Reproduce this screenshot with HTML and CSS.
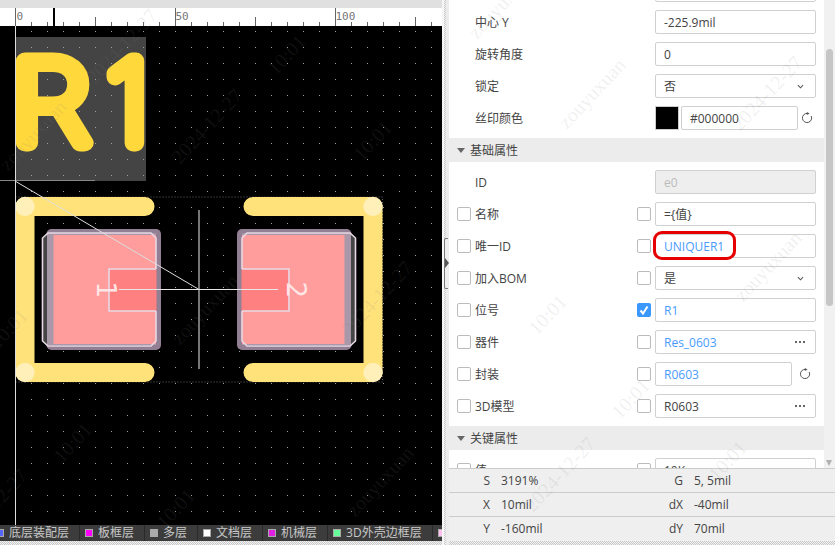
FILE: index.html
```html
<!DOCTYPE html>
<html lang="zh-CN">
<head>
    <meta charset="UTF-8">
    <title>PCB 属性</title>
    <link rel="stylesheet" href="styles.css">
</head>
<body>
    <div class="editor">
        <div class="top-strip"></div>
        <svg class="ruler" viewBox="0 8 442 18">
            <defs>
                <pattern id="ruler-minor" x="15" y="8" width="16" height="18" patternUnits="userSpaceOnUse">
                    <rect x="0" y="14" width="1" height="4" fill="#666"/>
                </pattern>
                <pattern id="ruler-mid" x="15" y="8" width="80" height="18" patternUnits="userSpaceOnUse">
                    <rect x="0" y="9" width="1" height="9" fill="#666"/>
                </pattern>
                <pattern id="ruler-major" x="15" y="8" width="160" height="18" patternUnits="userSpaceOnUse">
                    <rect x="0" y="0" width="1" height="18" fill="#666"/>
                </pattern>
            </defs>
            <rect x="0" y="8" width="442" height="18" fill="url(#ruler-minor)"/>
            <rect x="0" y="8" width="442" height="18" fill="url(#ruler-mid)"/>
            <rect x="0" y="8" width="442" height="18" fill="url(#ruler-major)"/>
            <rect x="53" y="8" width="2" height="18" fill="#000"/>
            <text class="ruler-num" x="16.5" y="20">0</text>
            <text class="ruler-num" x="175.5" y="20">50</text>
            <text class="ruler-num" x="335.5" y="20">100</text>
        </svg>

        <!-- canvas uses page coordinates -->
        <svg class="board" viewBox="0 26 442 499">
            <defs>
                <pattern id="grid" x="15" y="15" width="16" height="16" patternUnits="userSpaceOnUse">
                    <rect x="0" y="0" width="1" height="1" fill="#a0a0a0"/>
                </pattern>
                <g id="pad">
                    <rect x="46.5" y="229" width="114.5" height="121" rx="5" fill="#937f93"/>
                    <path d="M48 233.5H151L155.8 238V344L151 345.5H48L43 341V238Z" fill="#444"/>
                    <rect x="47" y="233" width="109" height="112" fill="#a898aa"/>
                    <rect x="53.5" y="235" width="102.5" height="109" fill="#ff9c9c"/>
                    <rect x="109.5" y="269.5" width="47" height="41" fill="#ff8080"/>
                    <path d="M156 269H109V311H156M156 269V238L151 233H48L42.5 238V341L48 346H151L156 341V311" fill="none" stroke="#e8d8e4" stroke-width="1.6"/>
                </g>
            </defs>
            <rect x="0" y="26" width="442" height="499" fill="#000"/>
            <rect x="15.5" y="37" width="130.5" height="144" fill="#444"/>
            <rect x="0" y="26" width="442" height="499" fill="url(#grid)"/>
            <text class="silk" x="11" y="143" textLength="79" lengthAdjust="spacingAndGlyphs">R</text>
            <text class="silk" x="107" y="143">1</text>

            <rect x="15.5" y="197" width="367" height="185" class="bounds"/>
            <use href="#pad"/>
            <use href="#pad" transform="matrix(-1 0 0 1 398 0)"/>
            <text class="pad-num" transform="translate(97 281.5) rotate(90)">1</text>
            <text class="pad-num" transform="translate(287 281.5) rotate(90)">2</text>

            <path class="outline" d="M25 206.5H145M25 206.5V372.5M25 372.5H145M373 206.5H253M373 206.5V372.5M373 372.5H253"/>
            <circle class="outline-joint" cx="25" cy="206.5" r="9.7"/>
            <circle class="outline-joint" cx="25" cy="372.5" r="9.7"/>
            <circle class="outline-joint" cx="373" cy="206.5" r="9.7"/>
            <circle class="outline-joint" cx="373" cy="372.5" r="9.7"/>

            <path class="axis-thick" d="M199 210V369"/>
            <path class="axis-thin" d="M119 289.5H278"/>
            <path class="guide" d="M15 181L199 289.5"/>
            <path class="cross-h" d="M0 180.5H95"/>
            <path class="cross-v" d="M15.5 26V525"/>
        </svg>

        <div class="layers">
            <div class="layer layer-first"><i class="swatch swatch-blue"></i>底层装配层</div>
            <div class="layer"><i class="swatch swatch-magenta"></i>板框层</div>
            <div class="layer"><i class="swatch swatch-grey"></i>多层</div>
            <div class="layer"><i class="swatch swatch-white"></i>文档层</div>
            <div class="layer"><i class="swatch swatch-purple"></i>机械层</div>
            <div class="layer"><i class="swatch swatch-green"></i>3D外壳边框层</div>
            <div class="layer"><i class="swatch swatch-pink"></i></div>
        </div>
        <div class="dots-strip"></div>
    </div>

    <div class="splitter">
        <div class="splitter-tab"><i class="splitter-arrow"></i></div>
    </div>

    <div class="panel">
        <div class="props">
            <div class="props-list">
                <div class="row">
                    <div class="row-label">中心 X</div>
                    <div class="field"><span></span></div>
                </div>
                <div class="row">
                    <div class="row-label">中心 Y</div>
                    <div class="field"><span>-225.9mil</span></div>
                </div>
                <div class="row">
                    <div class="row-label">旋转角度</div>
                    <div class="field"><span>0</span></div>
                </div>
                <div class="row">
                    <div class="row-label">锁定</div>
                    <div class="field">
                        <span>否</span>
                        <svg class="chevron" viewBox="0 0 8 5"><path d="M1 1L4 4L7 1"/></svg>
                    </div>
                </div>
                <div class="row">
                    <div class="row-label">丝印颜色</div>
                    <div class="color-swatch"></div>
                    <div class="field field-color"><span>#000000</span></div>
                    <svg class="reset reset-near" viewBox="0 0 12 12"><path d="M6.5 1.4A4.6 4.6 0 1 0 10.2 4"/><path class="reset-tip" d="M5.8 0L8.6 1.5L5.8 3Z"/></svg>
                </div>

                <div class="section"><i class="section-arrow"></i>基础属性</div>

                <div class="row">
                    <div class="row-label">ID</div>
                    <div class="field field-disabled"><span>e0</span></div>
                </div>
                <div class="row">
                    <label class="check"></label>
                    <div class="row-label row-label-check">名称</div>
                    <label class="check"></label>
                    <div class="field"><span>={值}</span></div>
                </div>
                <div class="row">
                    <label class="check"></label>
                    <div class="row-label row-label-check">唯一ID</div>
                    <label class="check"></label>
                    <div class="field field-blue">
                        <span>UNIQUER1</span>
                        <div class="highlight"></div>
                    </div>
                </div>
                <div class="row">
                    <label class="check"></label>
                    <div class="row-label row-label-check">加入BOM</div>
                    <label class="check"></label>
                    <div class="field">
                        <span>是</span>
                        <svg class="chevron" viewBox="0 0 8 5"><path d="M1 1L4 4L7 1"/></svg>
                    </div>
                </div>
                <div class="row">
                    <label class="check"></label>
                    <div class="row-label row-label-check">位号</div>
                    <label class="check check-on">
                        <svg viewBox="0 0 14 14"><path d="M3.5 7.5L6 10.5L10.5 3.5"/></svg>
                    </label>
                    <div class="field field-blue"><span>R1</span></div>
                </div>
                <div class="row">
                    <label class="check"></label>
                    <div class="row-label row-label-check">器件</div>
                    <label class="check"></label>
                    <div class="field field-blue">
                        <span>Res_0603</span>
                        <div class="more"><i></i><i></i><i></i></div>
                    </div>
                </div>
                <div class="row">
                    <label class="check"></label>
                    <div class="row-label row-label-check">封装</div>
                    <label class="check"></label>
                    <div class="field field-blue field-short"><span>R0603</span></div>
                    <svg class="reset" viewBox="0 0 12 12"><path d="M6.5 1.4A4.6 4.6 0 1 0 10.2 4"/><path class="reset-tip" d="M5.8 0L8.6 1.5L5.8 3Z"/></svg>
                </div>
                <div class="row">
                    <label class="check"></label>
                    <div class="row-label row-label-check">3D模型</div>
                    <label class="check"></label>
                    <div class="field">
                        <span>R0603</span>
                        <div class="more"><i></i><i></i><i></i></div>
                    </div>
                </div>

                <div class="section"><i class="section-arrow"></i>关键属性</div>

                <div class="row">
                    <label class="check"></label>
                    <div class="row-label row-label-check">值</div>
                    <label class="check"></label>
                    <div class="field"><span>10K</span></div>
                </div>
            </div>
            <div class="scrollbar">
                <div class="scroll-thumb"></div>
                <i class="scroll-down"></i>
            </div>
        </div>

        <div class="status">
            <div class="status-row">
                <div class="status-cell"><b>S</b><span>3191%</span></div>
                <div class="status-cell"><b>G</b><span>5, 5mil</span></div>
            </div>
            <div class="status-row">
                <div class="status-cell"><b>X</b><span>10mil</span></div>
                <div class="status-cell"><b>dX</b><span>-40mil</span></div>
            </div>
            <div class="status-row">
                <div class="status-cell"><b>Y</b><span>-160mil</span></div>
                <div class="status-cell"><b>dY</b><span>70mil</span></div>
            </div>
        </div>
        <div class="dots-strip"></div>
    </div>

    <!-- watermark over the whole window -->
    <svg class="watermark" viewBox="0 0 835 545">
        <text transform="translate(95 85) rotate(-47)">2024-12-27</text>
        <text transform="translate(8 172) rotate(-47)">zouyuxuan</text>
        <text transform="translate(180 165) rotate(-47)">2024-12-27</text>
        <text transform="translate(276 76) rotate(-47)">10:01</text>
        <text transform="translate(362 162) rotate(-47)">10:01</text>
        <text transform="translate(180 346) rotate(-47)">zouyuxuan</text>
        <text transform="translate(350 337) rotate(-47)">2024-12-27</text>
        <text transform="translate(-2 350) rotate(-47)">10:01</text>
        <text transform="translate(62 464) rotate(-47)">10:01</text>
        <text transform="translate(-35 545) rotate(-47)">2024-12-27</text>
        <text transform="translate(165 530) rotate(-47)">10:01</text>
        <text transform="translate(355 518) rotate(-47)">zouyuxuan</text>
        <text transform="translate(567 130) rotate(-47)">zouyuxuan</text>
        <text transform="translate(477 40) rotate(-47)">zouyuxuan</text>
        <text transform="translate(740 132) rotate(-47)">2024-12-27</text>
        <text transform="translate(537 336) rotate(-47)">10:01</text>
        <text transform="translate(743 303) rotate(-47)">zouyuxuan</text>
        <text transform="translate(533 513) rotate(-47)">2024-12-27</text>
        <text transform="translate(620 420) rotate(-47)">10:01</text>
        <text transform="translate(717 482) rotate(-47)">10:01</text>
    </svg>
</body>
</html>
```

FILE: styles.css
```css
/* Base */
* {
    margin: 0;
    padding: 0;
    box-sizing: border-box;
}

body {
    width: 835px;
    height: 545px;
    display: flex;
    position: relative;
    overflow: hidden;
    background: #fff;
    color: #444;
    font-family: "Open Sans", "Noto Sans CJK SC", sans-serif;
    font-size: 12px;
}

/* Left side: ruler, board, layer tabs */
.editor {
    width: 442px;
    height: 545px;
    display: flex;
    flex-direction: column;
}

.top-strip {
    height: 8px;
    background: #e0e0e0;
}

.ruler {
    display: block;
    width: 442px;
    height: 18px;
    background: #fff;
}

.ruler-num {
    font-family: "DejaVu Sans Mono", monospace;
    font-size: 11px;
    fill: #777;
}

.board {
    display: block;
    width: 442px;
    height: 499px;
}

.silk {
    font-family: Inter, sans-serif;
    font-weight: 100;
    font-size: 113px;
    fill: #ffd83c;
    stroke: #ffd83c;
    stroke-width: 17;
    stroke-linejoin: round;
    stroke-linecap: round;
}

.bounds {
    fill: none;
    stroke: #666;
    stroke-dasharray: 1 2;
}

.pad-num {
    font-family: "DejaVu Sans", sans-serif;
    font-weight: 400;
    font-size: 26px;
    fill: #ffe6e6;
}

.outline {
    fill: none;
    stroke: #ffe27a;
    stroke-width: 19;
    stroke-linecap: round;
}

.outline-joint {
    fill: #ffefb8;
}

.axis-thick {
    stroke: #777;
    stroke-width: 2;
}

.axis-thin {
    stroke: #e8e8e8;
    stroke-width: 1;
}

.guide {
    stroke: #ddd;
    stroke-width: 1;
    fill: none;
}

.cross-h {
    stroke: #888;
    stroke-width: 1;
}

.cross-v {
    stroke: #ddd;
    stroke-width: 1;
}

.layers {
    height: 16px;
    display: flex;
    overflow: hidden;
    background: #3c3c3c;
    color: #c8c8c8;
    line-height: 16px;
    white-space: nowrap;
}

.layer {
    display: flex;
    align-items: center;
    gap: 5px;
    padding: 0 10px 0 5px;
    border-right: 1px solid #2a2a2a;
    font-size: 12px;
}

.layer-first {
    margin-left: -9px;
}

.swatch {
    display: block;
    flex: none;
    width: 8px;
    height: 8px;
    border: 1px solid #aaa;
}

.swatch-blue { background: #5566ff; }
.swatch-magenta { background: #ff00ff; }
.swatch-grey { background: #aaa; }
.swatch-white { background: #fff; }
.swatch-purple { background: #e020e0; }
.swatch-green { background: #66ff99; }
.swatch-pink { background: #ffc0f0; }

.dots-strip {
    height: 4px;
    flex: none;
    background: repeating-conic-gradient(#c8c8c8 0 25%, #f2f2f2 0 50%) 0 0 / 2px 2px;
}

/* Splitter */
.splitter {
    width: 7px;
    height: 545px;
    position: relative;
    flex: none;
    background: linear-gradient(to right, #f6f6f6 2px, transparent 2px, transparent 4px, #ececec 4px),
        repeating-conic-gradient(#c8c8c8 0 25%, #f2f2f2 0 50%) 0 0 / 2px 2px;
}

.splitter-tab {
    position: absolute;
    left: 2px;
    top: 238px;
    width: 4px;
    height: 51px;
    border: 1px solid #777;
    border-right: none;
    border-radius: 2px 0 0 2px;
    background: #eee;
}

.splitter-arrow {
    position: absolute;
    left: 0;
    top: 19px;
    border-left: 4px solid #555;
    border-top: 5px solid transparent;
    border-bottom: 5px solid transparent;
}

/* Property panel */
.panel {
    width: 386px;
    height: 545px;
    display: flex;
    flex-direction: column;
}

.props {
    height: 468px;
    display: flex;
    overflow: hidden;
}

.props-list {
    width: 375px;
    margin-top: -26px;
}

.row {
    height: 32px;
    display: flex;
    align-items: center;
    padding-left: 8px;
}

.row-label {
    width: 198px;
    padding-left: 18px;
    padding-top: 1px;
    line-height: 24px;
    white-space: nowrap;
}

.row-label-check {
    width: 166px;
    padding-left: 4px;
}

.check {
    display: block;
    flex: none;
    width: 14px;
    height: 14px;
    margin-right: 0;
    border: 1px solid #bbb;
    border-radius: 2px;
    background: #fff;
}

.row-label-check + .check {
    margin-right: 4px;
}

.check-on {
    border: none;
    background: #3a97fb;
}

.check-on svg {
    display: block;
    width: 14px;
    height: 14px;
    fill: none;
    stroke: #fff;
    stroke-width: 2;
}

.field {
    width: 161px;
    height: 24px;
    flex: none;
    display: flex;
    align-items: center;
    justify-content: space-between;
    position: relative;
    padding: 0 9px 0 8px;
    border: 1px solid #d0d0d0;
    border-radius: 2px;
    background: #fff;
    color: #444;
    white-space: nowrap;
}

.field-blue {
    color: #4a9bff;
}

.field-disabled {
    background: #eee;
    color: #bbb;
}

.field-color {
    width: 117px;
    margin-left: 2px;
}

.field-short {
    width: 137px;
}

.color-swatch {
    width: 24px;
    height: 24px;
    flex: none;
    border: 1px solid #ccc;
    background: #000;
}

.chevron {
    width: 7px;
    height: 5px;
    fill: none;
    stroke: #555;
    stroke-width: 1.2;
    margin-right: 2px;
}

.more {
    display: flex;
    gap: 2px;
    margin-right: 1px;
}

.more i {
    display: block;
    width: 2px;
    height: 2px;
    background: #666;
}

.reset {
    width: 12px;
    height: 12px;
    flex: none;
    margin-left: 7px;
    fill: none;
    stroke: #555;
    stroke-width: 1;
}

.reset-near {
    margin-left: 3px;
}

.reset-tip {
    fill: #555;
    stroke: none;
}

/* Red marker over the unique id value */
.highlight {
    position: absolute;
    left: -3px;
    top: -4px;
    width: 83px;
    height: 29px;
    border: 3px solid #e60000;
    border-radius: 9px;
}

.section {
    height: 24px;
    margin: 4px 0;
    display: flex;
    align-items: center;
    gap: 5px;
    padding-left: 8px;
    background: #ececec;
    color: #444;
}

.section-arrow {
    display: block;
    border-top: 5px solid #666;
    border-left: 4.5px solid transparent;
    border-right: 4.5px solid transparent;
}

/* Scrollbar */
.scrollbar {
    width: 11px;
    position: relative;
    background: #f1f1f1;
}

.scroll-thumb {
    position: absolute;
    left: 2px;
    top: 49px;
    width: 7px;
    height: 257px;
    border-radius: 4px;
    background: #c6c6c6;
}

.scroll-down {
    position: absolute;
    left: 2px;
    top: 460px;
    border-top: 6px solid #b0b0b0;
    border-left: 3.5px solid transparent;
    border-right: 3.5px solid transparent;
}

/* Status block */
.status {
    height: 73px;
    border-top: 1px solid #ccc;
    background: #efefef;
}

.status-row {
    height: 24px;
    display: flex;
    padding-bottom: 1px;
    border-bottom: 1px solid #ccc;
}

.status-row:last-child {
    padding-bottom: 2px;
    border-bottom: none;
}

.status-cell {
    width: 196px;
    display: flex;
    align-items: center;
}

.status-cell b {
    width: 41px;
    margin-right: 11px;
    text-align: right;
    font-weight: 400;
}

/* Watermark */
.watermark {
    position: absolute;
    left: 0;
    top: 0;
    width: 835px;
    height: 545px;
    pointer-events: none;
}

.watermark text {
    font-family: "Liberation Serif", serif;
    font-size: 20px;
    fill: rgba(128, 128, 128, 0.12);
}
```
